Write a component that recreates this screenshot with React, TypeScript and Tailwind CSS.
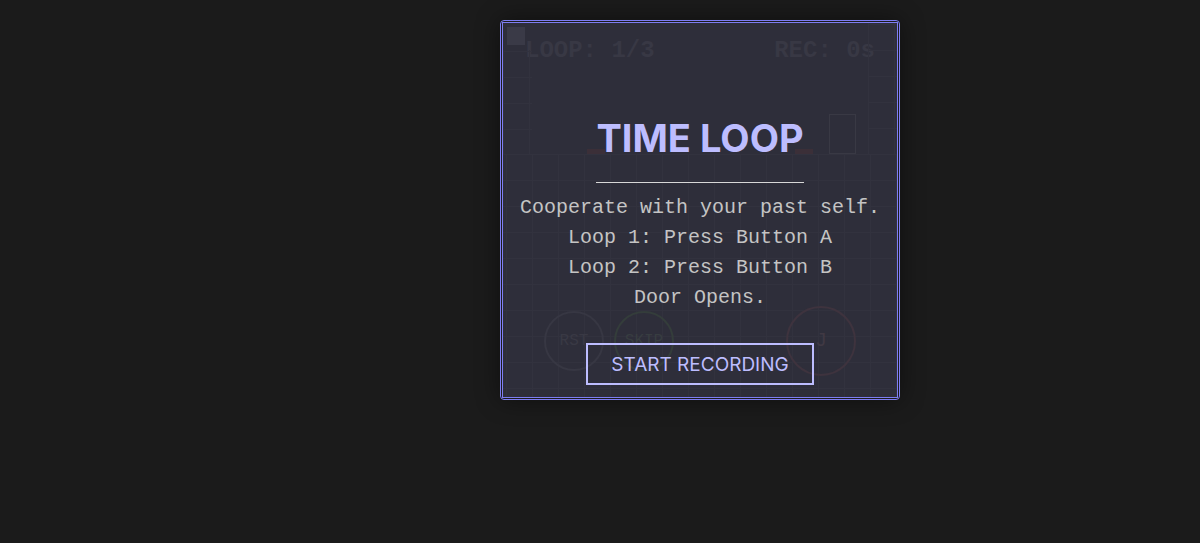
import React from 'react';

const mono = "font-['Courier_New','Liberation_Mono',monospace]";
const sans = "font-['Inter','Liberation_Sans',sans-serif]";

const gridBg =
  'bg-[linear-gradient(to_right,#33333f_1px,transparent_1px),linear-gradient(to_bottom,#33333f_1px,transparent_1px)] bg-[size:26px_26px]';

const GameLayer: React.FC = () => (
  <div className="absolute inset-0 flex flex-col">
    {/* hud */}
    <div className={`absolute top-0 left-0 right-0 flex justify-between px-[22px] pt-[10px] text-[24px] font-bold leading-[36px] text-[#393946] ${mono}`}>
      <span>LOOP: 1/3</span>
      <span>REC: 0s</span>
    </div>
    <div className="absolute top-[4px] left-[4px] w-[18px] h-[18px] bg-[#3c3c49]" />

    <div className="relative h-[131px] flex">
      <div className={`w-[29px] mt-[27px] ${gridBg} bg-[position:0_1px]`} />
      <div className="relative flex-1">
        {/* buttons A / B */}
        <div className="absolute left-[55px] bottom-0 w-[18px] h-[5px] bg-[#3d2f38]" />
        <div className="absolute left-[263px] bottom-0 w-[18px] h-[5px] bg-[#3d2f38]" />
        {/* door */}
        <div className="absolute left-[297px] bottom-0 w-[27px] h-[40px] border border-[#3a3a46]" />
      </div>
      <div className={`w-[29px] ${gridBg} bg-[position:0_1px]`} />
    </div>

    <div className={`relative flex-1 ${gridBg} bg-[position:3px_0]`}>
      <div className={`absolute left-[41px] top-[157px] flex gap-[10px] ${mono} text-[16px]`}>
        <div className="w-[60px] h-[60px] rounded-full border-2 border-[#383844] flex items-center justify-center text-[#3a3a46]">RST</div>
        <div className="w-[60px] h-[60px] rounded-full border-2 border-[#353f3b] flex items-center justify-center text-[#393f42]">SKIP</div>
      </div>
      <div className={`absolute left-[283px] top-[152px] w-[70px] h-[70px] rounded-full border-2 border-[#40343f] flex items-center justify-center text-[20px] text-[#423a45] ${mono}`}>
        J
      </div>
    </div>
  </div>
);

const App: React.FC = () => {
  return (
    <div className="min-h-screen bg-[#1b1b1b] pl-[500px] pt-5">
      <div className="w-[400px] h-[380px] rounded-[4px] border border-[#7d7df2] bg-[#1b1b1b] p-px shadow-[0_0_24px_rgba(0,0,0,0.45)]">
        <div className="relative w-full h-full border border-[#7d7df2] bg-[#2e2e3a] overflow-hidden">
          <GameLayer />

          <div className="absolute inset-0 flex flex-col items-center pt-[96px] bg-[#2e2e3a]/10">
            <h1 className={`text-[38px] leading-[38px] font-bold text-[#bdbdff] border-b border-[#d8d8d8] pb-[25px] ${sans}`}>
              TIME LOOP
            </h1>
            <p className={`mt-[10px] text-center text-[20px] leading-[30px] text-[#c4c4c4] ${mono}`}>
              Cooperate with your past self.<br />
              Loop 1: Press Button A<br />
              Loop 2: Press Button B<br />
              Door Opens.
            </p>
            <button className={`mt-[30px] border-2 border-[#bdbdff] px-[23px] pt-[6px] pb-[4px] text-[19px] leading-[28px] text-[#bdbdff] ${sans}`}>
              START RECORDING
            </button>
          </div>
        </div>
      </div>
    </div>
  );
};

export default App;
